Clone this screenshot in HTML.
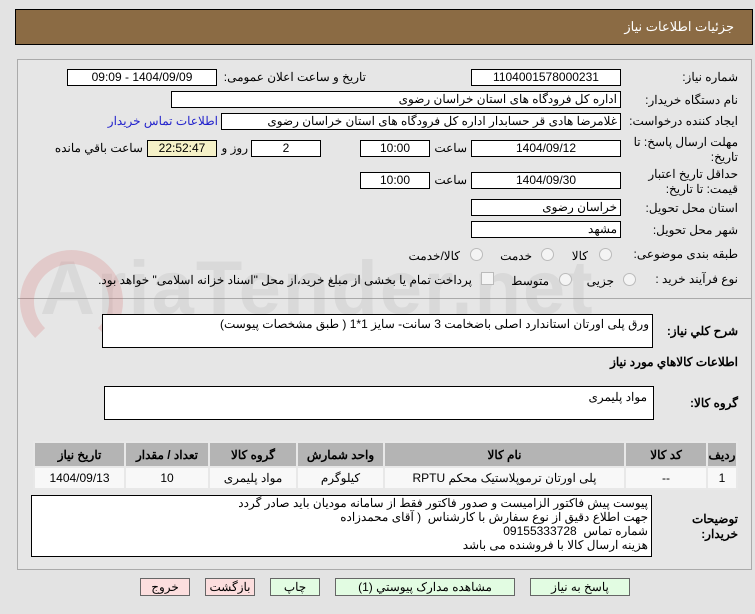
<!DOCTYPE html>
<html><head><meta charset="utf-8"><style>
body{margin:0;width:755px;height:614px;background:#e3e3e3;font-family:Tahoma,"Liberation Sans","Noto Sans CJK SC",sans-serif;font-size:12px;color:#000;position:relative;overflow:hidden}
.a{position:absolute;white-space:nowrap}
.hdr{left:15px;top:9px;width:736px;height:34px;background:#8b6b44;border:1px solid #000}
.hdr span{position:absolute;right:18px;top:9px;color:#fff;font-size:13px}
.panel{position:absolute;border:1px solid #aaa;background:#e6e6e6}
.l{position:absolute;white-space:nowrap;text-align:right;direction:rtl}
.box{position:absolute;background:#fff;border:1px solid #000;box-sizing:border-box;height:17px;line-height:15px;font-size:12px;direction:rtl;padding:0 3px;white-space:nowrap;overflow:hidden}
.c{text-align:center}
.radio{position:absolute;width:11px;height:11px;border-radius:50%;border:1px solid #bbb;background:#f4f4f4}
.btn{position:absolute;top:578px;height:18px;border:1px solid #666;box-sizing:border-box;background:#e2fce2;text-align:center;line-height:16px;font-size:12px}
table{position:absolute;left:33px;top:441px;width:705px;border-collapse:separate;border-spacing:2px;background:#e8e8e8;direction:rtl}
td,th{text-align:center;font-size:12px;padding:0}
th{background:#b4b4b4;height:23px}
td{background:#f8f8f8;height:20px}
.wm{position:absolute;left:40px;top:245px;font-size:76px;font-weight:bold;color:rgba(150,150,150,0.16);font-family:"Liberation Sans",sans-serif;letter-spacing:2px}
</style></head><body>
<div class="a hdr"><span>جزئیات اطلاعات نیاز</span></div>
<div class="panel" style="left:17px;top:59px;width:733px;height:239px"></div>
<div class="panel" style="left:17px;top:298px;width:733px;height:270px"></div>
<div class="wm">AriaTender.net</div>
<div style="position:absolute;left:20px;top:250px;width:75px;height:75px;border:14px solid rgba(210,80,80,0.18);border-radius:50%;border-bottom-color:transparent"></div>

<div class="l" style="right:17px;top:70px">شماره نیاز:</div>
<div class="box c" style="left:471px;top:69px;width:150px">1104001578000231</div>
<div class="l" style="right:389px;top:70px">تاریخ و ساعت اعلان عمومی:</div>
<div class="box c" style="left:67px;top:69px;width:150px">1404/09/09 - 09:09</div>

<div class="l" style="right:17px;top:93px">نام دستگاه خریدار:</div>
<div class="box" style="left:171px;top:91px;width:450px">اداره کل فرودگاه های استان خراسان رضوی</div>

<div class="l" style="right:17px;top:114px">ایجاد کننده درخواست:</div>
<div class="box" style="left:221px;top:113px;width:400px">غلامرضا هادی قر حسابدار اداره کل فرودگاه های استان خراسان رضوی</div>
<div class="l" style="right:537px;top:114px;color:#22c">اطلاعات تماس خریدار</div>

<div class="l" style="right:17px;top:135px;line-height:15px">مهلت ارسال پاسخ: تا<br>تاریخ:</div>
<div class="box c" style="left:471px;top:140px;width:150px">1404/09/12</div>
<div class="l" style="right:288px;top:141px">ساعت</div>
<div class="box c" style="left:360px;top:140px;width:70px">10:00</div>
<div class="box c" style="left:251px;top:140px;width:70px">2</div>
<div class="l" style="right:507px;top:141px">روز و</div>
<div class="box c" style="left:147px;top:140px;width:70px;background:#f5f1c8">22:52:47</div>
<div class="l" style="right:612px;top:141px">ساعت باقي مانده</div>

<div class="l" style="right:17px;top:167px;line-height:15px">حداقل تاریخ اعتبار<br>قیمت: تا تاریخ:</div>
<div class="box c" style="left:471px;top:172px;width:150px">1404/09/30</div>
<div class="l" style="right:288px;top:173px">ساعت</div>
<div class="box c" style="left:360px;top:172px;width:70px">10:00</div>

<div class="l" style="right:17px;top:201px">استان محل تحویل:</div>
<div class="box" style="left:471px;top:199px;width:150px">خراسان رضوی</div>
<div class="l" style="right:17px;top:223px">شهر محل تحویل:</div>
<div class="box" style="left:471px;top:221px;width:150px">مشهد</div>

<div class="l" style="right:17px;top:247px">طبقه بندی موضوعی:</div>
<div class="radio" style="left:599px;top:248px"></div><div class="l" style="right:167px;top:249px">کالا</div>
<div class="radio" style="left:541px;top:248px"></div><div class="l" style="right:223px;top:249px">خدمت</div>
<div class="radio" style="left:470px;top:248px"></div><div class="l" style="right:295px;top:249px">کالا/خدمت</div>

<div class="l" style="right:17px;top:272px">نوع فرآیند خرید :</div>
<div class="radio" style="left:623px;top:273px"></div><div class="l" style="right:141px;top:274px">جزیی</div>
<div class="radio" style="left:559px;top:273px"></div><div class="l" style="right:206px;top:274px">متوسط</div>
<div style="position:absolute;left:481px;top:272px;width:11px;height:11px;border:1px solid #bbb;background:#f4f4f4"></div>
<div class="l" style="right:283px;top:273px">پرداخت تمام یا بخشی از مبلغ خرید،از محل "اسناد خزانه اسلامی" خواهد بود.</div>

<div class="l" style="right:17px;top:324px;font-weight:bold">شرح کلي نياز:</div>
<div class="box" style="left:102px;top:314px;width:551px;height:34px;line-height:18px;background:#fff">ورق پلی اورتان استاندارد اصلی باضخامت 3 سانت- سایز 1*1 ( طبق مشخصات پیوست)</div>
<div class="l" style="right:17px;top:355px;font-weight:bold">اطلاعات کالاهاي مورد نياز</div>
<div class="l" style="right:17px;top:396px;font-weight:bold">گروه کالا:</div>
<div class="box" style="left:104px;top:386px;width:550px;height:34px;line-height:20px;padding-right:6px">مواد پلیمری</div>

<table><tr><th style="width:28px">رديف</th><th style="width:80px">کد کالا</th><th style="width:239px">نام کالا</th><th style="width:85px">واحد شمارش</th><th style="width:86px">گروه کالا</th><th style="width:82px">تعداد / مقدار</th><th>تاريخ نياز</th></tr>
<tr><td>1</td><td>--</td><td>پلی اورتان ترموپلاستیک محکم RPTU</td><td>کیلوگرم</td><td>مواد پلیمری</td><td>10</td><td>1404/09/13</td></tr></table>

<div class="l" style="right:17px;top:512px;font-weight:bold;line-height:15px">توضیحات<br>خریدار:</div>
<div class="box" style="left:31px;top:495px;width:621px;height:62px;line-height:14px;white-space:normal">پیوست پیش فاکتور الزامیست و صدور فاکتور فقط از سامانه مودیان باید صادر گردد<br>جهت اطلاع دقیق از نوع سفارش با کارشناس&nbsp; ( آقای محمدزاده<br>شماره تماس&nbsp; 09155333728<br>هزینه ارسال کالا با فروشنده می باشد</div>

<div class="btn" style="left:530px;width:100px">پاسخ به نياز</div>
<div class="btn" style="left:335px;width:180px">مشاهده مدارک پيوستي (1)</div>
<div class="btn" style="left:270px;width:50px">چاپ</div>
<div class="btn" style="left:205px;width:50px;background:#fcdede">بازگشت</div>
<div class="btn" style="left:140px;width:50px;background:#fcdede">خروج</div>
</body></html>
